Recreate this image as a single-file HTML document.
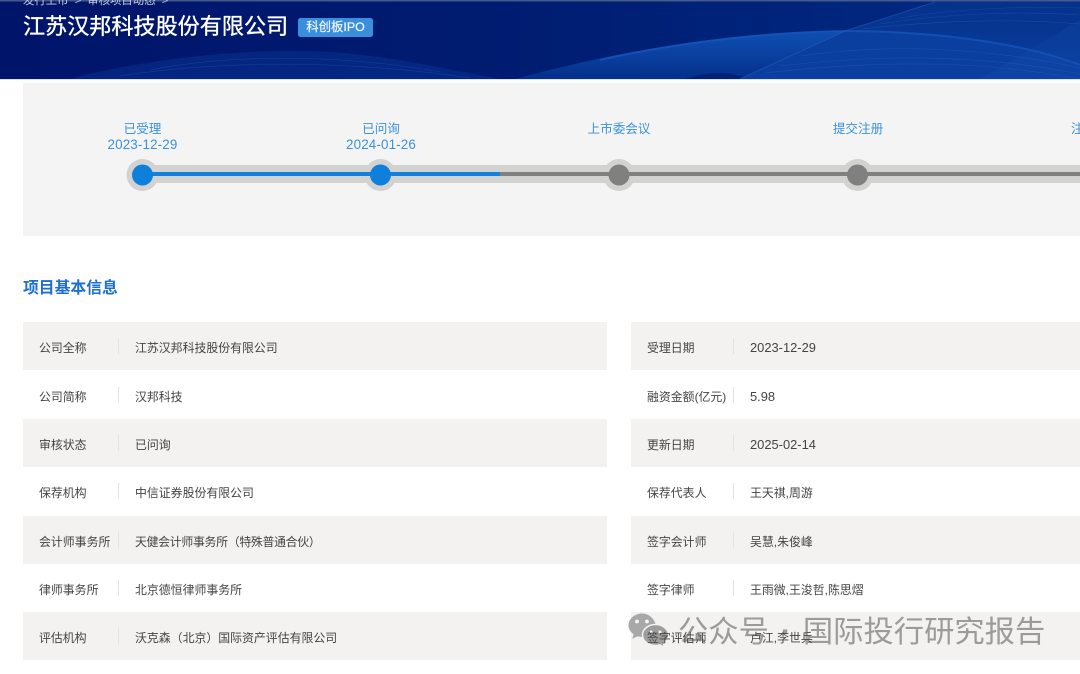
<!DOCTYPE html>
<html lang="zh">
<head>
<meta charset="utf-8">
<style>
html,body{margin:0;padding:0;background:#fff}
body{width:1080px;height:674px;overflow:hidden;position:relative;font-family:"Liberation Sans","Noto Sans CJK SC",sans-serif}
.abs{position:absolute;white-space:nowrap}
#hd{position:absolute;left:0;top:0;width:1080px;height:79px;overflow:hidden}
#panel{position:absolute;left:23px;top:83px;width:1057px;height:153px;background:#f4f4f4}
.st{position:absolute;color:#3a92dd;font-size:12.6px;line-height:15px;text-align:center;width:120px;filter:blur(.3px)}
.st b{font-weight:400;font-size:13.4px;letter-spacing:.14px}
.row{position:absolute;height:48px}
.row.g{background:#f3f2f0}
.l{left:23px;width:584px}
.r{left:631px;width:449px}
.t{position:absolute;top:17.5px;font-size:11.9px;line-height:16px;color:#444;white-space:nowrap;filter:blur(.3px)}
.d{font-size:12.9px}
.sep{position:absolute;top:16px;width:1px;height:16px;background:#e4e3e1}
</style>
</head>
<body>
<div id="hd">
<svg width="1080" height="79" viewBox="0 0 1080 79" style="position:absolute;left:0;top:0">
<defs>
<linearGradient id="bg" x1="0" x2="1" y1="0" y2="0"><stop offset="0" stop-color="#00146a"/><stop offset=".5" stop-color="#001d72"/><stop offset="1" stop-color="#012c86"/></linearGradient>
<linearGradient id="band" x1="0" x2="0" y1="30" y2="79" gradientUnits="userSpaceOnUse"><stop offset="0" stop-color="#0e50b4"/><stop offset=".55" stop-color="#0a3f9e"/><stop offset="1" stop-color="#042f8a"/></linearGradient>
<linearGradient id="fan" x1="0" x2="0" y1="0" y2="79" gradientUnits="userSpaceOnUse"><stop offset="0" stop-color="#05318a"/><stop offset="1" stop-color="#0a3f9f"/></linearGradient>
</defs>
<rect width="1080" height="79" fill="url(#bg)"/>
<path d="M70 79C140 60 230 50 300 51C370 51 440 68 500 79Z" fill="#0a3a9a" opacity=".42"/>
<path d="M845 31L935 2L1080 2V65C1010 40 930 31 845 31Z" fill="url(#fan)"/>
<path d="M515 79C600 56 720 31 845 31C930 31 1020 42 1080 65V79H750C730 71 710 71 685 79Z" fill="url(#band)"/>
<path d="M740 79L845 31C930 31 1020 42 1080 65V79Z" fill="#0a3f9f"/>
<path d="M600 60C680 42 770 32 845 31C930 31 1020 42 1080 65" fill="none" stroke="#1857bd" stroke-width="2" opacity=".7"/>
<path d="M740 79L845 31L935 2" fill="none" stroke="#2a68c6" stroke-width="1" opacity=".45"/>
<path d="M980 79L1080 20V79Z" fill="#1a58b8" opacity=".18"/>
<g fill="none" stroke="#3a74cc" stroke-width=".6" opacity=".3">
<path d="M880 24C950 13 1020 11 1080 15"/><path d="M862 29C950 19 1020 19 1080 24"/><path d="M900 18C960 8 1030 6 1080 8"/>
<path d="M800 56C880 44 980 46 1080 68"/><path d="M780 66C880 54 980 54 1080 74"/><path d="M765 73C880 60 980 60 1080 79"/>
<path d="M150 70C230 54 340 54 440 72"/><path d="M120 76C220 60 350 60 470 78"/>
</g>
<rect width="1080" height="1.500" fill="#56688f" opacity=".8"/>
</svg>
<div class="abs" style="left:23px;top:-7px;font-size:11.4px;line-height:16px;color:#c6cbe0;filter:blur(.3px)">发行上市<span style="margin:0 6px">&gt;</span>审核项目动态<span style="margin:0 6px">&gt;</span></div>
<div class="abs" style="left:23px;top:13px;font-size:22.1px;line-height:28px;color:#fff;-webkit-text-stroke:.35px #fff;filter:blur(.25px)">江苏汉邦科技股份有限公司</div>
<div class="abs" style="left:298px;top:18px;width:75px;height:19px;border-radius:2.5px;background:#3a8fdc;color:#f2f7fd;font-size:12.4px;line-height:19px;text-align:center;-webkit-text-stroke:.2px #f2f7fd;filter:blur(.2px)">科创板IPO</div>
</div>
<div class="abs" style="left:0;top:79px;width:1080px;height:1px;background:#d9e1f2"></div>
<div id="panel"></div>

<div class="st" style="left:82.5px;top:122px">已受理<br><b>2023-12-29</b></div>
<div class="st" style="left:321px;top:122px">已问询<br><b>2024-01-26</b></div>
<div class="st" style="left:559px;top:122px">上市委会议</div>
<div class="st" style="left:798px;top:122px">提交注册</div>
<div class="st" style="left:1071px;top:122px;width:30px;text-align:left">注</div>

<svg width="1080" height="60" viewBox="0 150 1080 60" style="position:absolute;left:0;top:150px">
<rect x="142" y="165" width="938" height="18" fill="#d2d2d0"/>
<g fill="#d2d2d0"><circle cx="142.5" cy="175" r="16"/><circle cx="380.5" cy="175" r="16"/><circle cx="619" cy="175" r="16"/><circle cx="857.5" cy="175" r="16"/></g>
<rect x="142" y="172" width="358" height="4" fill="#1280dc"/>
<rect x="500" y="172" width="580" height="4" fill="#808080"/>
<circle cx="142.5" cy="175" r="10.5" fill="#0f7fdc"/><circle cx="380.5" cy="175" r="10.5" fill="#0f7fdc"/>
<circle cx="619" cy="175" r="10.5" fill="#808080"/><circle cx="857.5" cy="175" r="10.5" fill="#808080"/>
</svg>

<div class="abs" style="left:23px;top:279px;font-size:15.8px;line-height:20px;font-weight:700;color:#1a6fd0;filter:blur(.25px)">项目基本信息</div>

<div class="row g l" style="top:322px"><div class="t" style="left:16px">公司全称</div><div class="sep" style="left:95px"></div><div class="t" style="left:112px">江苏汉邦科技股份有限公司</div></div>
<div class="row l" style="top:371px"><div class="t" style="left:16px">公司简称</div><div class="sep" style="left:95px"></div><div class="t" style="left:112px">汉邦科技</div></div>
<div class="row g l" style="top:419px"><div class="t" style="left:16px">审核状态</div><div class="sep" style="left:95px"></div><div class="t" style="left:112px">已问询</div></div>
<div class="row l" style="top:467px"><div class="t" style="left:16px">保荐机构</div><div class="sep" style="left:95px"></div><div class="t" style="left:112px">中信证券股份有限公司</div></div>
<div class="row g l" style="top:516px"><div class="t" style="left:16px">会计师事务所</div><div class="sep" style="left:95px"></div><div class="t" style="left:112px;letter-spacing:-.3px">天健会计师事务所（特殊普通合伙）</div></div>
<div class="row l" style="top:564px"><div class="t" style="left:16px">律师事务所</div><div class="sep" style="left:95px"></div><div class="t" style="left:112px">北京德恒律师事务所</div></div>
<div class="row g l" style="top:612px"><div class="t" style="left:16px">评估机构</div><div class="sep" style="left:95px"></div><div class="t" style="left:112px">沃克森（北京）国际资产评估有限公司</div></div>

<div class="row g r" style="top:322px"><div class="t" style="left:16px">受理日期</div><div class="sep" style="left:102px"></div><div class="t d" style="left:119px">2023-12-29</div></div>
<div class="row r" style="top:371px"><div class="t" style="left:16px">融资金额(亿元)</div><div class="sep" style="left:102px"></div><div class="t d" style="left:119px">5.98</div></div>
<div class="row g r" style="top:419px"><div class="t" style="left:16px">更新日期</div><div class="sep" style="left:102px"></div><div class="t d" style="left:119px">2025-02-14</div></div>
<div class="row r" style="top:467px"><div class="t" style="left:16px">保荐代表人</div><div class="sep" style="left:102px"></div><div class="t" style="left:119px">王天祺,周游</div></div>
<div class="row g r" style="top:516px"><div class="t" style="left:16px">签字会计师</div><div class="sep" style="left:102px"></div><div class="t" style="left:119px">吴慧,朱俊峰</div></div>
<div class="row r" style="top:564px"><div class="t" style="left:16px">签字律师</div><div class="sep" style="left:102px"></div><div class="t" style="left:119px">王雨微,王浚哲,陈思熠</div></div>
<div class="row g r" style="top:612px"></div>

<svg width="44" height="38" viewBox="0 0 44 38" style="position:absolute;left:627px;top:612px;filter:blur(.3px)">
<path d="M15 1.5C7.5 1.5 1.5 6.8 1.5 13.2C1.5 16.9 3.5 20 6.7 22.200L5.3 26.8L10.5 24.2C12.3 24.7 14 24.9 15.8 24.9C19 24.9 26 18 29 13.5C27.5 6.8 22 1.5 15 1.5Z" fill="#a8a8a8"/>
<circle cx="10" cy="9.5" r="1.9" fill="#f5f5f5"/><circle cx="20" cy="9.5" r="1.9" fill="#f5f5f5"/>
<path d="M28.5 12.5C21.5 12.5 15.5 17 15.5 23C15.5 29 21.5 33.5 28.5 33.5C30 33.5 31.5 33.3 32.8 32.8L37.5 35.3L36.3 31.1C39.5 29 41.5 26.2 41.5 23C41.5 17 35.5 12.5 28.5 12.5Z" fill="#9d9d9d" stroke="#f3f2f0" stroke-width="1.5"/>
<circle cx="24" cy="20" r="1.5" fill="#f5f5f5"/><circle cx="33" cy="20" r="1.5" fill="#f5f5f5"/>
</svg>
<div class="abs" style="left:678px;top:613.5px;font-size:30.3px;line-height:38px;color:rgba(120,120,120,.72);filter:blur(.3px)">公众号<span style="display:inline-block;width:34px;text-align:center;font-weight:700">·</span>国际投行研究报告</div>
<div class="t" style="left:647px;top:629.5px">签字评估师</div>
<div class="t" style="left:750px;top:629.5px">卢江,李世兵</div>
</body>
</html>
